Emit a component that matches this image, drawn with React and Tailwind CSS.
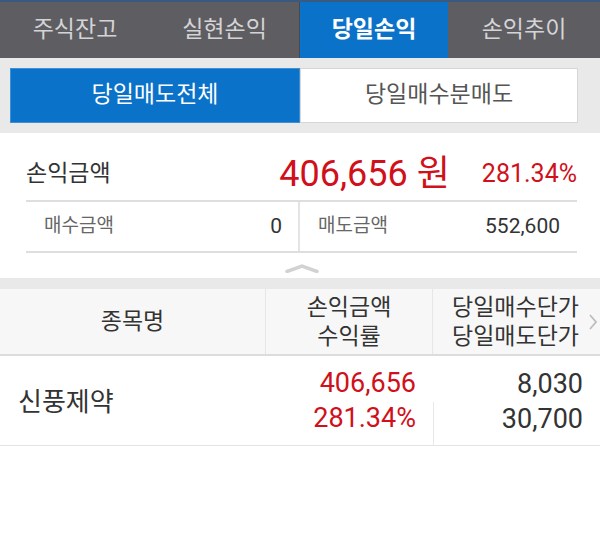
import React from 'react';

const font = { fontFamily: '"Roboto", "Noto Sans CJK KR", sans-serif' };

const tabs = ['주식잔고', '실현손익', '당일손익', '손익추이'];

const App = () => {
    return (
        <div className="w-[600px] h-[542px] bg-white overflow-hidden text-[#333]" style={font}>
            {/* top tabs */}
            <div className="flex h-[58px] bg-[#5e5d62] border-t-2 border-[#3a5a80]">
                {tabs.map((t, i) => (
                    <div
                        key={t}
                        className={`flex items-center justify-center text-[23px] ${i === 3 ? 'w-[152px]' : i === 2 ? 'w-[148px]' : 'w-[150px]'} ${i === 2 ? 'bg-[#0a72c8] text-white font-bold' : 'text-[#d4d4d6]'} ${i === 1 ? 'border-r border-[#4a494d]' : ''}`}
                    >
                        {t}
                    </div>
                ))}
            </div>

            {/* sub tabs */}
            <div className="bg-[#e9e9e9] h-[75px] px-[10px] pt-[10px] pr-[22px]">
                <div className="flex h-[55px]">
                    <div className="w-[290px] bg-[#0a72c8] border border-[#3d8fd6] flex items-center justify-center text-white text-[23px]">
                        당일매도전체
                    </div>
                    <div className="flex-1 bg-white border border-[#d6d6d6] flex items-center justify-center text-[#555] text-[23px]">
                        당일매수분매도
                    </div>
                </div>
            </div>

            {/* summary */}
            <div className="bg-white h-[145px] px-[26px] pr-[23px]">
                <div className="flex items-center h-[69px] pt-[15px] border-b-2 border-[#dedede]">
                    <div className="text-[23px] text-[#333]">손익금액</div>
                    <div className="ml-auto text-[36px] text-[#d0101a] leading-none">406,656 원</div>
                    <div className="ml-[32px] text-[25px] text-[#d0101a]">281.34%</div>
                </div>
                <div className="flex h-[51px] border-b-2 border-[#dedede]">
                    <div className="flex items-center w-[274px] pl-[18px] pr-[16px] border-r-2 border-[#e4e4e4]">
                        <span className="text-[#666] text-[19px]">매수금액</span>
                        <span className="ml-auto text-[#333] text-[21px]">0</span>
                    </div>
                    <div className="flex items-center flex-1 pl-[18px] pr-[17px]">
                        <span className="text-[#666] text-[19px]">매도금액</span>
                        <span className="ml-auto text-[#333] text-[21px]">552,600</span>
                    </div>
                </div>
                <div className="flex justify-center pt-[11px]">
                    <svg width="34" height="9" viewBox="0 0 34 9">
                        <path d="M2 7.5 L17 2 L32 7.5" fill="none" stroke="#d2d2d2" strokeWidth="3.5" strokeLinecap="round" />
                    </svg>
                </div>
            </div>

            <div className="h-[11px] bg-[#e9e9e9]" />

            {/* table header */}
            <div className="flex h-[67px] bg-[#f7f7f7] border-b-2 border-[#dcdcdc] text-[23px] leading-[29px] text-[#333]">
                <div className="w-[266px] flex items-center justify-center border-r border-[#e6e6e6]">종목명</div>
                <div className="w-[167px] flex flex-col items-center justify-center border-r border-[#e6e6e6]">
                    <span>손익금액</span>
                    <span>수익률</span>
                </div>
                <div className="flex-1 flex items-center pl-[19px] relative">
                    <div className="flex flex-col">
                        <span>당일매수단가</span>
                        <span>당일매도단가</span>
                    </div>
                    <svg className="absolute right-[2px] top-[24px]" width="10" height="18" viewBox="0 0 10 18">
                        <path d="M2 2 L8 9 L2 16" fill="none" stroke="#bdbdbd" strokeWidth="1.8" />
                    </svg>
                </div>
            </div>

            {/* row */}
            <div className="flex h-[90px] border-b border-[#e4e4e4]">
                <div className="w-[266px] flex items-center pl-[18px] pt-[4px] text-[26px] text-[#333]">신풍제약</div>
                <div className="w-[167px] flex flex-col items-end justify-center pr-[17px] text-[27px] leading-[35px] text-[#d0101a]">
                    <span>406,656</span>
                    <span>281.34%</span>
                </div>
                <div className="flex-1 flex flex-col">
                    <div className="h-[46px] flex items-end justify-end pr-[17px] text-[27px] leading-[35px]">8,030</div>
                    <div className="flex-1 flex items-start justify-end pr-[17px] border-l border-[#e8e8e8] text-[27px] leading-[35px]">30,700</div>
                </div>
            </div>
        </div>
    );
};

export default App;
